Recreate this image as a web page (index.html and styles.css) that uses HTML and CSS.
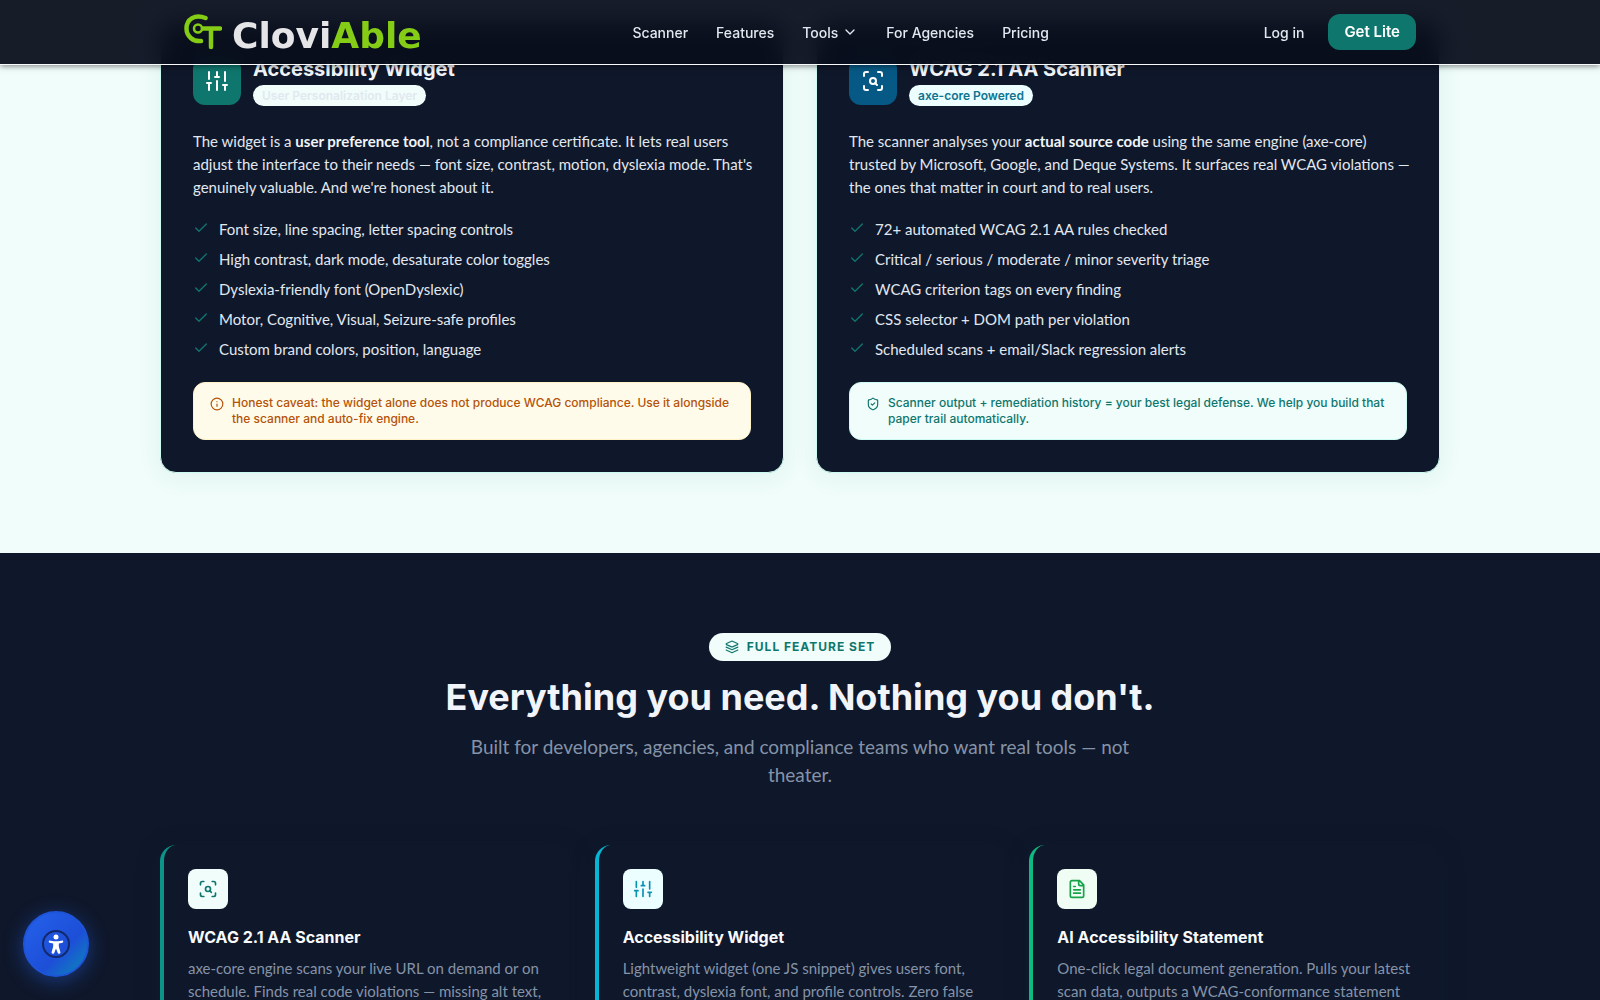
FILE: index.html
```
<!DOCTYPE html>
<html lang="en">
<head>
    <meta charset="UTF-8">
    <meta name="viewport" content="width=device-width, initial-scale=1">
    <title>CloviAble</title>
    <link rel="stylesheet" href="styles.css">
</head>
<body>
<!-- shared icons -->
<svg class="sprite" aria-hidden="true">
    <symbol id="i-sliders" viewBox="0 0 24 24">
        <path d="M4 21v-7M4 10V3M12 21v-9M12 8V3M20 21v-5M20 12V3M2 14h4M10 8h4M18 16h4"/>
    </symbol>
    <symbol id="i-scan" viewBox="0 0 24 24">
        <path d="M3 7V5a2 2 0 0 1 2-2h2M17 3h2a2 2 0 0 1 2 2v2M21 17v2a2 2 0 0 1-2 2h-2M7 21H5a2 2 0 0 1-2-2v-2M16 16l-1.9-1.9"/>
        <circle cx="12" cy="12" r="3"/>
    </symbol>
    <symbol id="i-check" viewBox="0 0 24 24"><path d="M20 6L9 17l-5-5"/></symbol>
    <symbol id="i-info" viewBox="0 0 24 24"><circle cx="12" cy="12" r="10"/><path d="M12 16v-4M12 8h.01"/></symbol>
    <symbol id="i-shield" viewBox="0 0 24 24">
        <path d="M20 13c0 5-3.500 7.500-7.660 8.950a1 1 0 0 1-.67-.01C7.500 20.500 4 18 4 13V6a1 1 0 0 1 1-1c2 0 4.500-1.200 6.240-2.720a1.170 1.170 0 0 1 1.520 0C14.510 3.810 17 5 19 5a1 1 0 0 1 1 1zM9 12l2 2 4-4"/>
    </symbol>
    <symbol id="i-layers" viewBox="0 0 24 24">
        <path d="M12.830 2.180a2 2 0 0 0-1.660 0L2.600 6.080a1 1 0 0 0 0 1.830l8.580 3.910a2 2 0 0 0 1.660 0l8.580-3.900a1 1 0 0 0 0-1.830zM22 12.180l-9.170 4.160a2 2 0 0 1-1.660 0L2 12.180M22 17.180l-9.170 4.160a2 2 0 0 1-1.660 0L2 17.180"/>
    </symbol>
    <symbol id="i-file" viewBox="0 0 24 24">
        <path d="M15 2H6a2 2 0 0 0-2 2v16a2 2 0 0 0 2 2h12a2 2 0 0 0 2-2V7zM14 2v4a2 2 0 0 0 2 2h4M10 9H8M16 13H8M16 17H8"/>
    </symbol>
    <symbol id="i-down" viewBox="0 0 24 24"><path d="M6 9l6 6 6-6"/></symbol>
</svg>

<header class="header">
    <div class="container header-inner">
        <a href="#" class="logo">
            <svg class="logo-mark" viewBox="0 0 38 36" aria-hidden="true">
                <path d="M21.500 4C11 -0.500 2.500 5.500 2.500 14.500C2.500 22 9 28 17 27" stroke-width="4.500"/>
                <circle cx="14" cy="14.500" r="4" stroke-width="2.500"/>
                <path d="M19 14.500H36M27 15V33" stroke-width="4.500"/>
            </svg>
            <span class="logo-text">Clovi<span>Able</span></span>
        </a>
        <nav class="nav">
            <a href="#">Scanner</a>
            <a href="#">Features</a>
            <button type="button">Tools <svg class="icon"><use href="#i-down"/></svg></button>
            <a href="#">For Agencies</a>
            <a href="#">Pricing</a>
        </nav>
        <div class="header-right">
            <a href="#" class="login">Log in</a>
            <a href="#" class="btn">Get Lite</a>
        </div>
    </div>
</header>

<section class="compare">
    <div class="container compare-grid">
        <article class="panel">
            <div class="panel-head">
                <div class="panel-icon teal"><svg class="icon"><use href="#i-sliders"/></svg></div>
                <div>
                    <h3>Accessibility Widget</h3>
                    <span class="tag faded">User Personalization Layer</span>
                </div>
            </div>
            <p>The widget is a <strong>user preference tool</strong>, not a compliance certificate. It lets real users adjust the interface to their needs — font size, contrast, motion, dyslexia mode. That's genuinely valuable. And we're honest about it.</p>
            <ul>
                <li><svg class="icon"><use href="#i-check"/></svg>Font size, line spacing, letter spacing controls</li>
                <li><svg class="icon"><use href="#i-check"/></svg>High contrast, dark mode, desaturate color toggles</li>
                <li><svg class="icon"><use href="#i-check"/></svg>Dyslexia-friendly font (OpenDyslexic)</li>
                <li><svg class="icon"><use href="#i-check"/></svg>Motor, Cognitive, Visual, Seizure-safe profiles</li>
                <li><svg class="icon"><use href="#i-check"/></svg>Custom brand colors, position, language</li>
            </ul>
            <div class="note warn">
                <svg class="icon"><use href="#i-info"/></svg>
                <span>Honest caveat: the widget alone does not produce WCAG compliance. Use it alongside the scanner and auto-fix engine.</span>
            </div>
        </article>
        <article class="panel">
            <div class="panel-head">
                <div class="panel-icon blue"><svg class="icon"><use href="#i-scan"/></svg></div>
                <div>
                    <h3>WCAG 2.1 AA Scanner</h3>
                    <span class="tag">axe-core Powered</span>
                </div>
            </div>
            <p>The scanner analyses your <strong>actual source code</strong> using the same engine (axe-core) trusted by Microsoft, Google, and Deque Systems. It surfaces real WCAG violations — the ones that matter in court and to real users.</p>
            <ul>
                <li><svg class="icon"><use href="#i-check"/></svg>72+ automated WCAG 2.1 AA rules checked</li>
                <li><svg class="icon"><use href="#i-check"/></svg>Critical / serious / moderate / minor severity triage</li>
                <li><svg class="icon"><use href="#i-check"/></svg>WCAG criterion tags on every finding</li>
                <li><svg class="icon"><use href="#i-check"/></svg>CSS selector + DOM path per violation</li>
                <li><svg class="icon"><use href="#i-check"/></svg>Scheduled scans + email/Slack regression alerts</li>
            </ul>
            <div class="note good">
                <svg class="icon"><use href="#i-shield"/></svg>
                <span>Scanner output + remediation history = your best legal defense. We help you build that paper trail automatically.</span>
            </div>
        </article>
    </div>
</section>

<section class="features">
    <div class="container">
        <div class="section-head">
            <span class="eyebrow"><svg class="icon"><use href="#i-layers"/></svg>Full Feature Set</span>
            <h2>Everything you need. Nothing you don't.</h2>
            <p>Built for developers, agencies, and compliance teams who want real tools — not theater.</p>
        </div>
        <div class="feature-grid">
            <article class="feature f-teal">
                <div class="feature-icon"><svg class="icon"><use href="#i-scan"/></svg></div>
                <h3>WCAG 2.1 AA Scanner</h3>
                <p>axe-core engine scans your live URL on demand or on schedule. Finds real code violations — missing alt text,</p>
            </article>
            <article class="feature f-cyan">
                <div class="feature-icon"><svg class="icon"><use href="#i-sliders"/></svg></div>
                <h3>Accessibility Widget</h3>
                <p>Lightweight widget (one JS snippet) gives users font, contrast, dyslexia font, and profile controls. Zero false</p>
            </article>
            <article class="feature f-green">
                <div class="feature-icon"><svg class="icon"><use href="#i-file"/></svg></div>
                <h3>AI Accessibility Statement</h3>
                <p>One-click legal document generation. Pulls your latest scan data, outputs a WCAG-conformance statement</p>
            </article>
        </div>
    </div>
</section>

<button type="button" class="fab" aria-label="Accessibility options">
    <svg viewBox="0 0 28 28" aria-hidden="true">
        <circle cx="14" cy="14" r="13" fill="none" stroke="#12296b" stroke-width="2"/>
        <circle cx="14" cy="7" r="2.500"/>
        <path d="M7 10.500Q6.200 12.400 7.500 12.800L11.200 13.600V16.500L9.500 22.500Q10.500 24.500 12 23.400L14 18.500L16 23.400Q17.500 24.500 18.500 22.500L16.800 16.500V13.600L20.500 12.800Q21.800 12.400 21 10.500L16 11.200H12Z"/>
    </svg>
</button>
</body>
</html>
```
FILE: styles.css
```
* {
    box-sizing: border-box;
}

html {
    overflow-x: hidden;
    scrollbar-width: none;
}

body, h2, h3, p, ul {
    margin: 0;
    padding: 0;
}

body {
    font-family: Lato, sans-serif;
    font-size: 15px;
    color: #e2e8f0;
    background: #0f172a;
}

h2, h3, .header, .tag, .note, .eyebrow {
    font-family: Inter, sans-serif;
}

ul {
    list-style: none;
}

a {
    color: inherit;
    text-decoration: none;
}

button {
    padding: 0;
    border: none;
    font: inherit;
    color: inherit;
    background: none;
    cursor: pointer;
}

.sprite {
    display: none;
}

.icon {
    flex: none;
    width: 16px;
    height: 16px;
    fill: none;
    stroke: currentColor;
    stroke-width: 2;
    stroke-linecap: round;
    stroke-linejoin: round;
}

.container {
    max-width: 1280px;
    margin: 0 auto;
}

/* header */
.header {
    position: fixed;
    top: 0;
    left: 0;
    right: 0;
    z-index: 10;
    border-bottom: 1px solid #f8fafc;
    font-size: 14px;
    background: rgba(9, 14, 28, 0.94);
    -webkit-backdrop-filter: blur(12px);
    backdrop-filter: blur(12px);
    box-shadow: 0 1px 6px rgba(0, 0, 0, 0.5);
}

.header-inner {
    display: flex;
    align-items: center;
    justify-content: space-between;
    height: 64px;
    padding: 0 24px;
}

.logo {
    display: flex;
    align-items: center;
    gap: 10px;
}

.logo-mark {
    width: 38px;
    height: 36px;
    fill: none;
    stroke: #84cc16;
    stroke-linecap: round;
}

.logo-text {
    padding-top: 8px;
    font: bold 36px/40px "DejaVu Sans", sans-serif;
    color: #e5e5e7;
}

.logo-text span {
    color: #84cc16;
}

.nav {
    display: flex;
    align-items: center;
    gap: 28px;
    font-weight: 500;
}

.nav button {
    display: flex;
    align-items: center;
    gap: 4px;
}

.header-right {
    display: flex;
    align-items: center;
    gap: 20px;
    font-weight: 500;
}

.login {
    padding: 0 4px;
}

.btn {
    padding: 8px 16px;
    border-radius: 12px;
    font-size: 15px;
    line-height: 20px;
    font-weight: 600;
    color: #fff;
    background: #0f766e;
}

/* widget vs scanner */
.compare {
    padding: 22px 0 80px;
    background: #f0fdfa;
}

.compare-grid {
    display: grid;
    grid-template-columns: 1fr 1fr;
    gap: 32px;
}

.panel {
    padding: 32px;
    border: 1px solid #ccfbf1;
    border-radius: 16px;
    background: #0f172a;
    box-shadow: 0 4px 24px rgba(15, 118, 110, 0.08);
}

.panel-head {
    display: flex;
    align-items: center;
    gap: 12px;
    margin-bottom: 24px;
}

.panel-icon {
    display: flex;
    align-items: center;
    justify-content: center;
    width: 48px;
    height: 48px;
    border-radius: 12px;
    color: #fff;
}

.panel-icon .icon {
    width: 24px;
    height: 24px;
}

.teal {
    background: #0f766e;
}

.blue {
    background: #075985;
}

.panel-head h3 {
    margin-bottom: 2px;
    font-size: 20px;
    line-height: 28px;
    font-weight: 700;
    color: #f1f5f9;
}

.tag {
    display: block;
    width: fit-content;
    padding: 2px 9px;
    border-radius: 12px;
    font-size: 12px;
    line-height: 17px;
    font-weight: 600;
    color: #0e7490;
    background: #ecfeff;
}

.tag.faded {
    color: #e2e8f0;
    background: #f0fdfa;
}

.panel p {
    margin: 0 -8px 20px 0;
    line-height: 23px;
}

.panel strong {
    font-weight: 700;
    color: #f1f5f9;
}

.panel ul {
    display: grid;
    gap: 10px;
    margin-bottom: 23px;
}

.panel li {
    display: flex;
    gap: 10px;
    line-height: 20px;
}

.panel li .icon {
    margin-top: 1px;
    color: #0f766e;
}

.note {
    display: flex;
    gap: 8px;
    padding: 12px 16px;
    border: 1px solid;
    border-radius: 12px;
    font-size: 12px;
    line-height: 16px;
    font-weight: 500;
}

.note .icon {
    width: 14px;
    height: 14px;
    margin-top: 2px;
}

.warn {
    border-color: #fef3c7;
    color: #b45309;
    background: #fffbeb;
}

.good {
    border-color: #ccfbf1;
    color: #0f766e;
    background: #f0fdfa;
}

/* features */
.features {
    padding: 80px 0;
}

.section-head {
    display: flex;
    flex-direction: column;
    align-items: center;
    margin-bottom: 56px;
    text-align: center;
}

.eyebrow {
    display: flex;
    align-items: center;
    gap: 8px;
    padding: 6px 16px;
    border-radius: 14px;
    font-size: 12px;
    line-height: 16px;
    font-weight: 700;
    letter-spacing: 1px;
    text-transform: uppercase;
    color: #0f766e;
    background: #f0fdfa;
}

.eyebrow .icon {
    width: 14px;
    height: 14px;
}

h2 {
    margin: 14px 0;
    font-size: 36px;
    line-height: 44px;
    font-weight: 700;
    color: #f1f5f9;
}

.section-head p {
    max-width: 700px;
    font-size: 19px;
    line-height: 28px;
    color: #8593a8;
}

.feature-grid {
    display: grid;
    grid-template-columns: repeat(3, 1fr);
    gap: 24px;
}

.feature {
    padding: 24px;
    border-left: 4px solid;
    border-radius: 16px;
    background: #0f172a;
    box-shadow: 0 4px 24px rgba(13, 40, 50, 0.3);
}

.feature-icon {
    display: flex;
    align-items: center;
    justify-content: center;
    width: 40px;
    height: 40px;
    margin-bottom: 16px;
    border-radius: 8px;
}

.feature-icon .icon {
    width: 20px;
    height: 20px;
}

.feature h3 {
    margin-bottom: 8px;
    font-size: 16px;
    line-height: 24px;
    font-weight: 700;
    color: #f8fafc;
}

.feature p {
    line-height: 23px;
    color: #8593a8;
}

.f-teal {
    border-color: #0d9488;
}

.f-teal .feature-icon {
    color: #0f766e;
    background: #f0fdfa;
}

.f-cyan {
    border-color: #06b6d4;
}

.f-cyan .feature-icon {
    color: #0891b2;
    background: #ecfeff;
}

.f-green {
    border-color: #10b981;
}

.f-green .feature-icon {
    color: #16a34a;
    background: #f0fdf4;
}

/* accessibility launcher */
.fab {
    position: fixed;
    left: 23px;
    bottom: 23px;
    z-index: 20;
    display: flex;
    align-items: center;
    justify-content: center;
    width: 66px;
    height: 66px;
    border: 2px solid #1e55d8;
    border-radius: 50%;
    background: linear-gradient(135deg, #2563eb 0%, #1d4ed8 60%, #0891b2 100%) border-box;
    box-shadow: 0 4px 20px rgba(37, 99, 235, 0.45);
}

.fab svg {
    width: 28px;
    height: 28px;
    fill: #fff;
}
```
